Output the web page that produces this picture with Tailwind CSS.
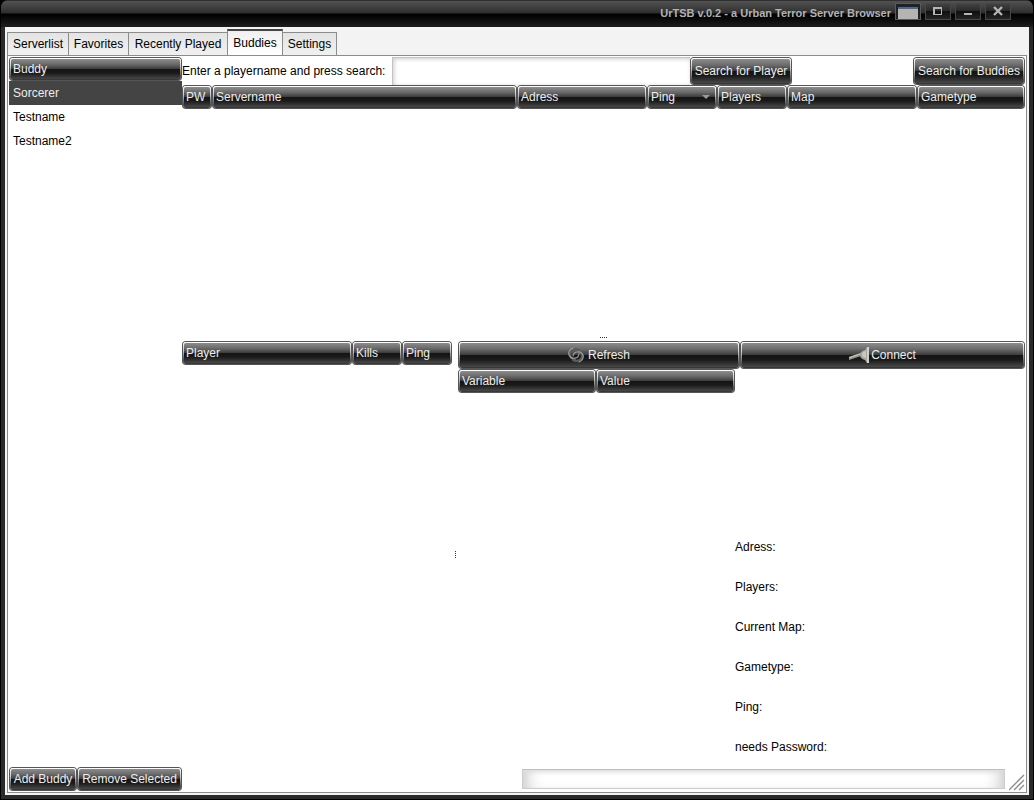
<!DOCTYPE html>
<html lang="en">
<head>
<meta charset="utf-8">
<title>UrTSB v.0.2 - a Urban Terror Server Browser</title>
<script src="https://cdn.jsdelivr.net/npm/@tailwindcss/browser@4"></script>
</head>
<body class="h-screen min-h-[640px] bg-black font-['Liberation_Sans',Arial,sans-serif] text-xs text-black
  [&_.gloss]:m-px [&_.gloss]:flex [&_.gloss]:items-center [&_.gloss]:rounded-[3px] [&_.gloss]:border [&_.gloss]:border-transparent [&_.gloss]:px-0.5 [&_.gloss]:font-normal [&_.gloss]:whitespace-nowrap [&_.gloss]:text-[#ededed] [&_.gloss]:shadow-[0_0_0_1px_#555]
  [&_.gloss]:[background:linear-gradient(#8c8c8c,#6c6c6c_25%,#3c3c3c_49%,#141414_51%,#1a1a1a_70%,#484848_100%)_padding-box,linear-gradient(#fff,#c8c8c8_40%,#666_75%,#333)_border-box]
  [&_th]:p-0 [&_th_.gloss]:h-[22px] [&_table]:table-fixed [&_table]:border-collapse">
<div class="flex h-full flex-col overflow-hidden rounded-t-lg border-x border-b border-black bg-[#2a2a2a]">
  <header class="flex h-[27px] shrink-0 items-start justify-end gap-1 bg-[linear-gradient(#1c1c1c,#515151_5%,#2e2e2e_48%,#000_52%,#040404_60%,#1d1d1d)] pr-[22px] text-[#b2b2b2]">
    <h1 class="pt-1.5 text-[11px] leading-[15px] font-bold">UrTSB v.0.2 - a Urban Terror Server Browser</h1>
    <div class="flex gap-1 pt-[3px]">
      <button aria-label="Window menu" class="h-[17px] w-[26px] border border-[#5a5a5a] bg-[#222]">
        <svg class="mx-auto block" width="20" height="15" viewBox="0 0 20 15"><path fill="#b4b4b0" d="M0 2h20v13H0z"/><path fill="#222" d="M0 2h20v1H0z"/><path fill="#4a6796" d="M0 3h20v2H0z"/></svg>
      </button>
      <button aria-label="Maximize" class="h-[17px] w-[26px] border border-[#484848] bg-[linear-gradient(#414141,#282828_49%,#101010_50%,#242424)]">
        <svg class="mx-auto block" width="24" height="15" viewBox="0 0 24 15"><path fill="#b5b5b5" fill-rule="evenodd" d="M7 3h9v8H7zm2 2v5h6V5z"/></svg>
      </button>
      <button aria-label="Minimize" class="h-[17px] w-[26px] border border-[#484848] bg-[linear-gradient(#414141,#282828_49%,#101010_50%,#242424)]">
        <svg class="mx-auto block" width="24" height="15" viewBox="0 0 24 15"><path fill="#b5b5b5" d="M8 9h8v2H8z"/></svg>
      </button>
      <button aria-label="Close" class="h-[17px] w-[26px] border border-[#484848] bg-[linear-gradient(#414141,#282828_49%,#101010_50%,#242424)]">
        <svg class="mx-auto block" width="24" height="15" viewBox="0 0 24 15"><path fill="none" stroke="#b5b5b5" stroke-width="2.4" d="m8 3 8 8m0-8-8 8"/></svg>
      </button>
    </div>
  </header>
  <div class="mx-1 mb-1 flex min-h-0 flex-1 flex-col bg-[#f3f3f3] px-0.5 pb-0.5">
    <nav class="flex h-7 shrink-0 items-end [&_button]:whitespace-nowrap">
      <button class="h-[23px] w-[62px] border border-b-0 border-[#8c8c8c] bg-[linear-gradient(#e4e4e4,#f0f0f0)]">Serverlist</button>
      <button class="h-[23px] w-[60px] border-t border-r border-[#8c8c8c] bg-[linear-gradient(#e4e4e4,#f0f0f0)]">Favorites</button>
      <button class="h-[23px] w-[98px] border-t border-[#8c8c8c] bg-[linear-gradient(#e4e4e4,#f0f0f0)]">Recently Played</button>
      <button class="h-[26px] w-[56px] border-x border-t-2 border-x-[#8c8c8c] border-t-[#444] bg-[linear-gradient(#f0f0f0,#fff)]" aria-current="page">Buddies</button>
      <button class="h-[23px] w-[54px] border-t border-r border-[#8c8c8c] bg-[linear-gradient(#e4e4e4,#f0f0f0)]">Settings</button>
    </nav>
    <main class="flex min-h-0 flex-1 border border-[#8c8c8c] bg-white p-px">
      <aside class="flex w-[173px] shrink-0 flex-col">
        <table class="w-full">
          <thead><tr><th><div class="gloss">Buddy</div></th></tr></thead>
          <tbody>
            <tr class="h-6 bg-[#444] text-[#ededed]"><td class="p-0 pl-1">Sorcerer</td></tr>
            <tr class="h-6"><td class="p-0 pl-1">Testname</td></tr>
            <tr class="h-6"><td class="p-0 pl-1">Testname2</td></tr>
          </tbody>
        </table>
        <div class="mt-auto flex">
          <button class="gloss h-[22px] w-[66px] justify-center">Add Buddy</button>
          <button class="gloss h-[22px] flex-1 justify-center">Remove Selected</button>
        </div>
      </aside>
      <section class="flex min-w-0 flex-1 flex-col">
        <div class="flex h-7 shrink-0 items-center">
          <label for="player" class="w-[210px] whitespace-nowrap">Enter a playername and press search:</label>
          <input id="player" type="text" class="h-7 min-w-0 max-w-[298px] flex-1 border-t border-l border-[#c4c4c4] px-1 shadow-[inset_1px_1px_4px_#ccc] outline-none">
          <button class="gloss h-[26px] w-[100px] justify-center">Search for Player</button>
          <button class="gloss ml-auto! h-[26px] w-[110px] justify-center">Search for Buddies</button>
        </div>
        <div class="min-h-0 flex-[248]">
          <table class="w-full">
            <colgroup><col class="w-[30px]"><col><col class="w-[130px]"><col class="w-[70px]"><col class="w-[70px]"><col class="w-[130px]"><col class="w-[108px]"></colgroup>
            <thead><tr>
              <th><div class="gloss">PW</div></th>
              <th><div class="gloss">Servername</div></th>
              <th><div class="gloss">Adress</div></th>
              <th><div class="gloss justify-between">Ping<svg class="mr-0.5" width="9" height="6" viewBox="0 0 9 6"><path fill="#999" d="M0 1h8L4 5z"/></svg></div></th>
              <th><div class="gloss">Players</div></th>
              <th><div class="gloss">Map</div></th>
              <th><div class="gloss">Gametype</div></th>
            </tr></thead>
          </table>
        </div>
        <div class="flex h-2 shrink-0 items-center justify-center"><svg width="7" height="1" viewBox="0 0 7 1"><path stroke="#333" stroke-dasharray="1" d="M0 .5h7"/></svg></div>
        <div class="flex min-h-0 flex-[426]">
          <div class="w-[270px] shrink-0">
            <table class="w-full">
              <colgroup><col><col class="w-[50px]"><col class="w-[50px]"></colgroup>
              <thead><tr><th><div class="gloss">Player</div></th><th><div class="gloss">Kills</div></th><th><div class="gloss">Ping</div></th></tr></thead>
            </table>
          </div>
          <div class="flex w-1.5 shrink-0 items-center justify-center"><svg width="1" height="7" viewBox="0 0 1 7"><path stroke="#333" stroke-dasharray="1" d="M.5 0v7"/></svg></div>
          <div class="flex min-w-0 flex-1 flex-col">
            <div class="flex shrink-0">
              <button class="gloss h-[26px] flex-[280] justify-center gap-1">
                <svg width="16" height="16" viewBox="0 0 16 16" fill="none" stroke-linecap="round"><path stroke="#5c5c5c" stroke-width="2.2" d="M11 3C7 1 2 3 2 7c0 3 2 5 5 5M5 13c4 2 9 0 9-4 0-3-2-5-5-5"/><path stroke="#a2a2a2" stroke-width="1.1" d="M5 1C2 2 0 5 1 8c1 2 3 4 6 3 3 0 4-3 4-5M11 15c3-1 5-4 4-7-1-2-3-4-6-3-2 0-4 2-4 4"/></svg>
                Refresh</button>
              <button class="gloss h-[26px] flex-[283] justify-center gap-0.5">
                <svg width="20" height="18" viewBox="0 0 20 18"><path fill="#96968f" d="m0 11 12-4v3L0 14z"/><path fill="#c4c4bd" d="m0 11 12-4v1L0 12.300z"/><path fill="#a5a59e" d="M11 9c0-3 2-4 5-5l2-3v16l-2-3c-3-1-5-2-5-5z"/><path fill="#c8c8c0" d="M13 8c0-2 2-3 4-3v7c-2 0-4-1-4-4z"/><path fill="#d0d0c8" d="M18 1h2v16h-2z"/></svg>
                Connect</button>
            </div>
            <div class="flex min-h-0 flex-1">
              <div class="w-[277px] shrink-0">
                <table class="w-full">
                  <colgroup><col class="w-[138px]"><col></colgroup>
                  <thead><tr><th><div class="gloss">Variable</div></th><th><div class="gloss">Value</div></th></tr></thead>
                </table>
              </div>
              <dl class="mt-auto [&_dt]:h-10 [&_dt]:leading-10">
                <dt>Adress:</dt><dt>Players:</dt><dt>Current Map:</dt><dt>Gametype:</dt><dt>Ping:</dt><dt>needs Password:</dt>
              </dl>
            </div>
          </div>
        </div>
        <footer class="flex h-6 shrink-0 items-center justify-end">
          <progress aria-label="Search progress" value="0" max="100" class="h-5 w-[483px] appearance-none border border-x-[#ccc] border-t-[#bcc0bc] border-b-[#ccc] bg-white shadow-[inset_0_2px_4px_#ddd,inset_16px_0_18px_-14px_#bbb,inset_-16px_0_18px_-14px_#bbb] [&::-webkit-progress-bar]:bg-transparent"></progress>
          <svg class="ml-1 self-end" width="16" height="18" viewBox="0 0 16 18" fill="none" stroke="#8c8c8c" stroke-width="1.4"><path d="M0 17 15 2M5 17 15 7M10 17l5-5"/></svg>
        </footer>
      </section>
    </main>
  </div>
</div>
</body>
</html>
